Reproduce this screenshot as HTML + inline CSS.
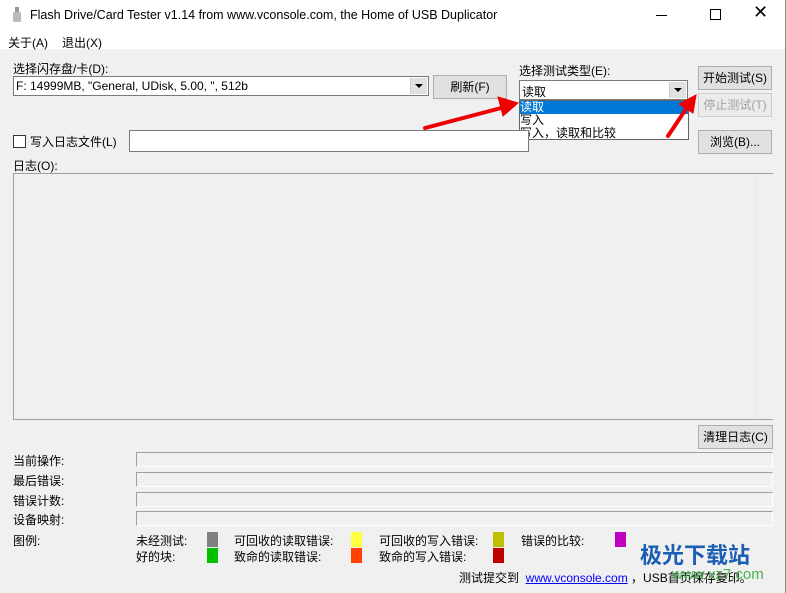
<!DOCTYPE html><html><head><meta charset="utf-8"><style>
body{margin:0;width:786px;height:593px;background:#f0f0f0;position:relative;overflow:hidden;font-family:"Liberation Sans","Noto Sans CJK SC",sans-serif;font-size:12px;color:#000}
.a{position:absolute;white-space:nowrap}
.btn{position:absolute;background:#e1e1e1;border:1px solid #adadad;text-align:center;line-height:22px;box-sizing:border-box}
.fld{position:absolute;background:#fff;border:1px solid #7a7a7a;box-sizing:border-box}
.ro{position:absolute;background:#f0f0f0;border:1px solid #a0a0a0;border-bottom-color:#fff;border-right-color:#fff;box-sizing:border-box}
.sw{position:absolute;width:11px;height:15px}
.dd{position:absolute;width:16px;height:16px;top:1px;right:1px;background:#e1e1e1;border-left:1px solid #ccc}
.dd:after{content:"";position:absolute;left:4px;top:6px;border-left:4px solid transparent;border-right:4px solid transparent;border-top:4px solid #000}
</style></head><body>
<div class="a" style="left:0;top:0;width:786px;height:49px;background:#fff"></div>
<svg class="a" style="left:12px;top:7px" width="10" height="16"><rect x="3" y="0" width="4" height="5" fill="#999"/><rect x="1" y="5" width="8" height="10" rx="1" fill="#bbb"/></svg>
<div class="a" style="left:30px;top:8px;font-size:12.5px">Flash Drive/Card Tester v1.14 from www.vconsole.com, the Home of USB Duplicator</div>
<div class="a" style="left:656px;top:15px;width:11px;border-top:1px solid #000"></div>
<div class="a" style="left:710px;top:9px;width:9px;height:9px;border:1px solid #000"></div>
<div class="a" style="left:753px;top:2px;font-size:18px">✕</div>
<div class="a" style="left:8px;top:34px">关于(A)</div><div class="a" style="left:62px;top:34px">退出(X)</div>
<div class="a" style="left:13px;top:60px">选择闪存盘/卡(D):</div>
<div class="fld" style="left:13px;top:76px;width:416px;height:20px"><span class="a" style="left:2px;top:2px">F: 14999MB, "General, UDisk, 5.00, ", 512b</span><div class="dd"></div></div>
<div class="btn" style="left:433px;top:75px;width:74px;height:24px">刷新(F)</div>
<div class="a" style="left:519px;top:62px">选择测试类型(E):</div>
<div class="fld" style="left:519px;top:80px;width:169px;height:20px"><span class="a" style="left:2px;top:2px">读取</span><div class="dd"></div></div>
<div class="a" style="left:519px;top:100px;width:170px;height:40px;background:#fff;border:1px solid #646464;box-sizing:border-box;line-height:13px">
<div style="background:#0078d7;color:#fff">读取</div><div>写入</div><div>写入，读取和比较</div></div>
<div class="btn" style="left:698px;top:66px;width:74px;height:24px">开始测试(S)</div>
<div class="btn" style="left:698px;top:93px;width:74px;height:24px;color:#a0a0a0;background:#ebebeb;border-color:#ccc">停止测试(T)</div>
<div class="a" style="left:13px;top:135px;width:11px;height:11px;border:1px solid #333;background:#fff"></div>
<div class="a" style="left:30px;top:133px">写入日志文件(L)</div>
<div class="fld" style="left:129px;top:130px;width:400px;height:22px"></div>
<div class="btn" style="left:698px;top:130px;width:74px;height:24px">浏览(B)...</div>
<div class="a" style="left:13px;top:157px">日志(O):</div>
<div class="a" style="left:13px;top:173px;width:760px;height:247px;border:1px solid #a0a0a0;box-sizing:border-box;background:#f0f0f0"></div>
<div class="a" style="left:756px;top:174px;width:16px;height:245px;background:#f0f0f0;border-left:1px solid #e6e6e6"></div>
<div class="btn" style="left:698px;top:425px;width:75px;height:24px">清理日志(C)</div>
<div class="a" style="left:13px;top:452px">当前操作:</div><div class="ro" style="left:136px;top:452px;width:637px;height:15px"></div>
<div class="a" style="left:13px;top:472px">最后错误:</div><div class="ro" style="left:136px;top:472px;width:637px;height:15px"></div>
<div class="a" style="left:13px;top:492px">错误计数:</div><div class="ro" style="left:136px;top:492px;width:637px;height:15px"></div>
<div class="a" style="left:13px;top:511px">设备映射:</div><div class="ro" style="left:136px;top:511px;width:637px;height:15px"></div>
<div class="a" style="left:13px;top:532px">图例:</div>
<div class="a" style="left:136px;top:532px">未经测试:</div><div class="sw" style="left:207px;top:532px;background:#808080"></div>
<div class="a" style="left:234px;top:532px">可回收的读取错误:</div><div class="sw" style="left:351px;top:532px;background:#ffff40"></div>
<div class="a" style="left:379px;top:532px">可回收的写入错误:</div><div class="sw" style="left:493px;top:532px;background:#c0c000"></div>
<div class="a" style="left:521px;top:532px">错误的比较:</div><div class="sw" style="left:615px;top:532px;background:#c000c0"></div>
<div class="a" style="left:136px;top:548px">好的块:</div><div class="sw" style="left:207px;top:548px;background:#00c000"></div>
<div class="a" style="left:234px;top:548px">致命的读取错误:</div><div class="sw" style="left:351px;top:548px;background:#ff4000"></div>
<div class="a" style="left:379px;top:548px">致命的写入错误:</div><div class="sw" style="left:493px;top:548px;background:#c00000"></div>
<div class="a" style="left:459px;top:569px">测试提交到 &nbsp;<span style="color:#00f;text-decoration:underline">www.vconsole.com</span> ，USB首页保存复印。</div>
<div class="a" style="left:640px;top:538px;font-size:22px;font-weight:bold;color:#1a5fb4">极光下载站</div>
<div class="a" style="left:672px;top:566px;font-size:15px;color:#4caf50">www.xz7.com</div>
<svg class="a" style="left:0;top:0" width="786" height="593"><g fill="#e00" stroke="#e00" stroke-width="4" stroke-linecap="round">
<line x1="425" y1="128" x2="505" y2="107"/><polygon points="518,103 498,97 503,116" stroke-width="1"/>
<line x1="668" y1="136" x2="688" y2="106"/><polygon points="696,95 679,104 693,113" stroke-width="1"/></g></svg>
<div class="a" style="left:785px;top:0;width:1px;height:593px;background:#888"></div>
</body></html>
